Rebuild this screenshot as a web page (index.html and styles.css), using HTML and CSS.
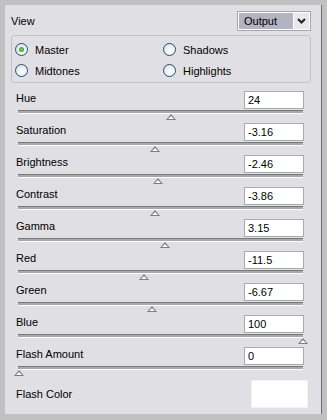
FILE: index.html
```html
<!DOCTYPE html>
<html>
<head>
<meta charset="utf-8">
<link rel="stylesheet" href="styles.css">
</head>
<body>
<div class="panel">
  <div class="head">
    <span class="lbl">View</span>
    <div class="select">
      <span class="sel-text">Output</span>
      <span class="sel-btn"><svg width="9" height="6" viewBox="0 0 9 6"><path d="M1 1 L4.5 4.5 L8 1" fill="none" stroke="#222" stroke-width="2"/></svg></span>
    </div>
  </div>
  <div class="group">
    <label class="radio"><span class="dot on"></span>Master</label>
    <label class="radio"><span class="dot"></span>Shadows</label>
    <label class="radio"><span class="dot"></span>Midtones</label>
    <label class="radio"><span class="dot"></span>Highlights</label>
  </div>
  <div class="rows">
    <div class="row"><div class="top"><span class="lbl">Hue</span><span class="inp">24</span></div><div class="track"><span class="thumb" style="left:153px"></span></div></div>
    <div class="row"><div class="top"><span class="lbl">Saturation</span><span class="inp">-3.16</span></div><div class="track"><span class="thumb" style="left:137px"></span></div></div>
    <div class="row"><div class="top"><span class="lbl">Brightness</span><span class="inp">-2.46</span></div><div class="track"><span class="thumb" style="left:140px"></span></div></div>
    <div class="row"><div class="top"><span class="lbl">Contrast</span><span class="inp">-3.86</span></div><div class="track"><span class="thumb" style="left:137px"></span></div></div>
    <div class="row"><div class="top"><span class="lbl">Gamma</span><span class="inp">3.15</span></div><div class="track"><span class="thumb" style="left:147px"></span></div></div>
    <div class="row"><div class="top"><span class="lbl">Red</span><span class="inp">-11.5</span></div><div class="track"><span class="thumb" style="left:126px"></span></div></div>
    <div class="row"><div class="top"><span class="lbl">Green</span><span class="inp">-6.67</span></div><div class="track"><span class="thumb" style="left:134px"></span></div></div>
    <div class="row"><div class="top"><span class="lbl">Blue</span><span class="inp">100</span></div><div class="track"><span class="thumb" style="left:285px"></span></div></div>
    <div class="row"><div class="top"><span class="lbl">Flash Amount</span><span class="inp">0</span></div><div class="track"><span class="thumb" style="left:1px"></span></div></div>
  </div>
  <div class="color-row">
    <span class="lbl">Flash Color</span>
    <span class="swatch"></span>
  </div>
</div>
</body>
</html>
```
FILE: styles.css
```css
html, body {
  margin: 0;
  padding: 0;
  background: #c0c0c0;
}
body {
  width: 327px;
  height: 420px;
  padding: 5px 0 0 5px;
  box-sizing: border-box;
  font-family: "Liberation Sans", Arial, sans-serif;
  font-size: 11px;
  color: #000;
}
.panel {
  width: 317px;
  height: 409px;
  box-sizing: border-box;
  background: #e0dfe3;
  border-right: 1px solid #6c6c78;
  position: relative;
}
.head {
  display: flex;
  justify-content: space-between;
  align-items: center;
  padding: 7px 11px 0 6px;
  height: 18px;
}
.select {
  display: flex;
  width: 72px;
  height: 18px;
  box-sizing: border-box;
  border: 1px solid #ffffff;
  outline: 1px solid #a7a6aa;
  background: #b4b3c2;
}
.sel-text {
  flex: 1;
  padding-left: 5px;
  line-height: 16px;
}
.sel-btn {
  width: 15px;
  background: #e8e8ec;
  display: flex;
  align-items: center;
  justify-content: center;
  border-left: 1px solid #fff;
}
.group {
  margin: 5px 10px 0 6px;
  height: 48px;
  box-sizing: border-box;
  border: 1px solid #c5c3bd;
  border-radius: 3px;
  display: grid;
  grid-template-columns: 148px 1fr;
  grid-auto-rows: 21px;
  padding: 3px 0 0 3px;
}
.radio {
  display: flex;
  align-items: center;
  gap: 7px;
}
.dot {
  width: 11px;
  height: 11px;
  border-radius: 50%;
  border: 1px solid #1c5180;
  background: radial-gradient(circle at 60% 60%, #ffffff 0%, #f2f2ef 40%, #d6d5cf 100%);
  position: relative;
}
.dot.on::after {
  content: "";
  position: absolute;
  left: 3px;
  top: 3px;
  width: 5px;
  height: 5px;
  border-radius: 50%;
  background: radial-gradient(circle, #7bd57b 0%, #21a121 80%);
}
.rows {
  margin-top: 8px;
}
.row {
  height: 32px;
}
.top {
  display: flex;
  justify-content: space-between;
  align-items: flex-start;
  padding: 0 17px 0 11px;
  height: 19px;
}
.top .lbl {
  padding-top: 1px;
}
.inp {
  width: 60px;
  height: 18px;
  box-sizing: border-box;
  background: #fff;
  border: 1px solid #a5acb5;
  line-height: 16px;
  padding-left: 3px;
}
.track {
  position: relative;
  margin: 0 18px 0 13px;
  height: 2px;
  border-top: 1px solid #7a7a7a;
  border-bottom: 1px solid #fdfdfd;
  background: #a9a9a9;
}
.thumb {
  position: absolute;
  top: 3px;
  width: 0;
  height: 0;
}
.thumb::before {
  content: "";
  position: absolute;
  left: -5px;
  top: 0;
  border-left: 5px solid transparent;
  border-right: 5px solid transparent;
  border-bottom: 6px solid #7c7c7c;
}
.thumb::after {
  content: "";
  position: absolute;
  left: -3px;
  top: 2px;
  border-left: 3px solid transparent;
  border-right: 3px solid transparent;
  border-bottom: 3px solid #ffffff;
}
.color-row {
  display: flex;
  justify-content: space-between;
  align-items: center;
  padding: 0 13px 0 11px;
  margin-top: 1px;
  height: 28px;
}
.swatch {
  width: 57px;
  height: 28px;
  background: #fff;
  border: 1px solid #f2f2f2;
  box-sizing: border-box;
}
```
